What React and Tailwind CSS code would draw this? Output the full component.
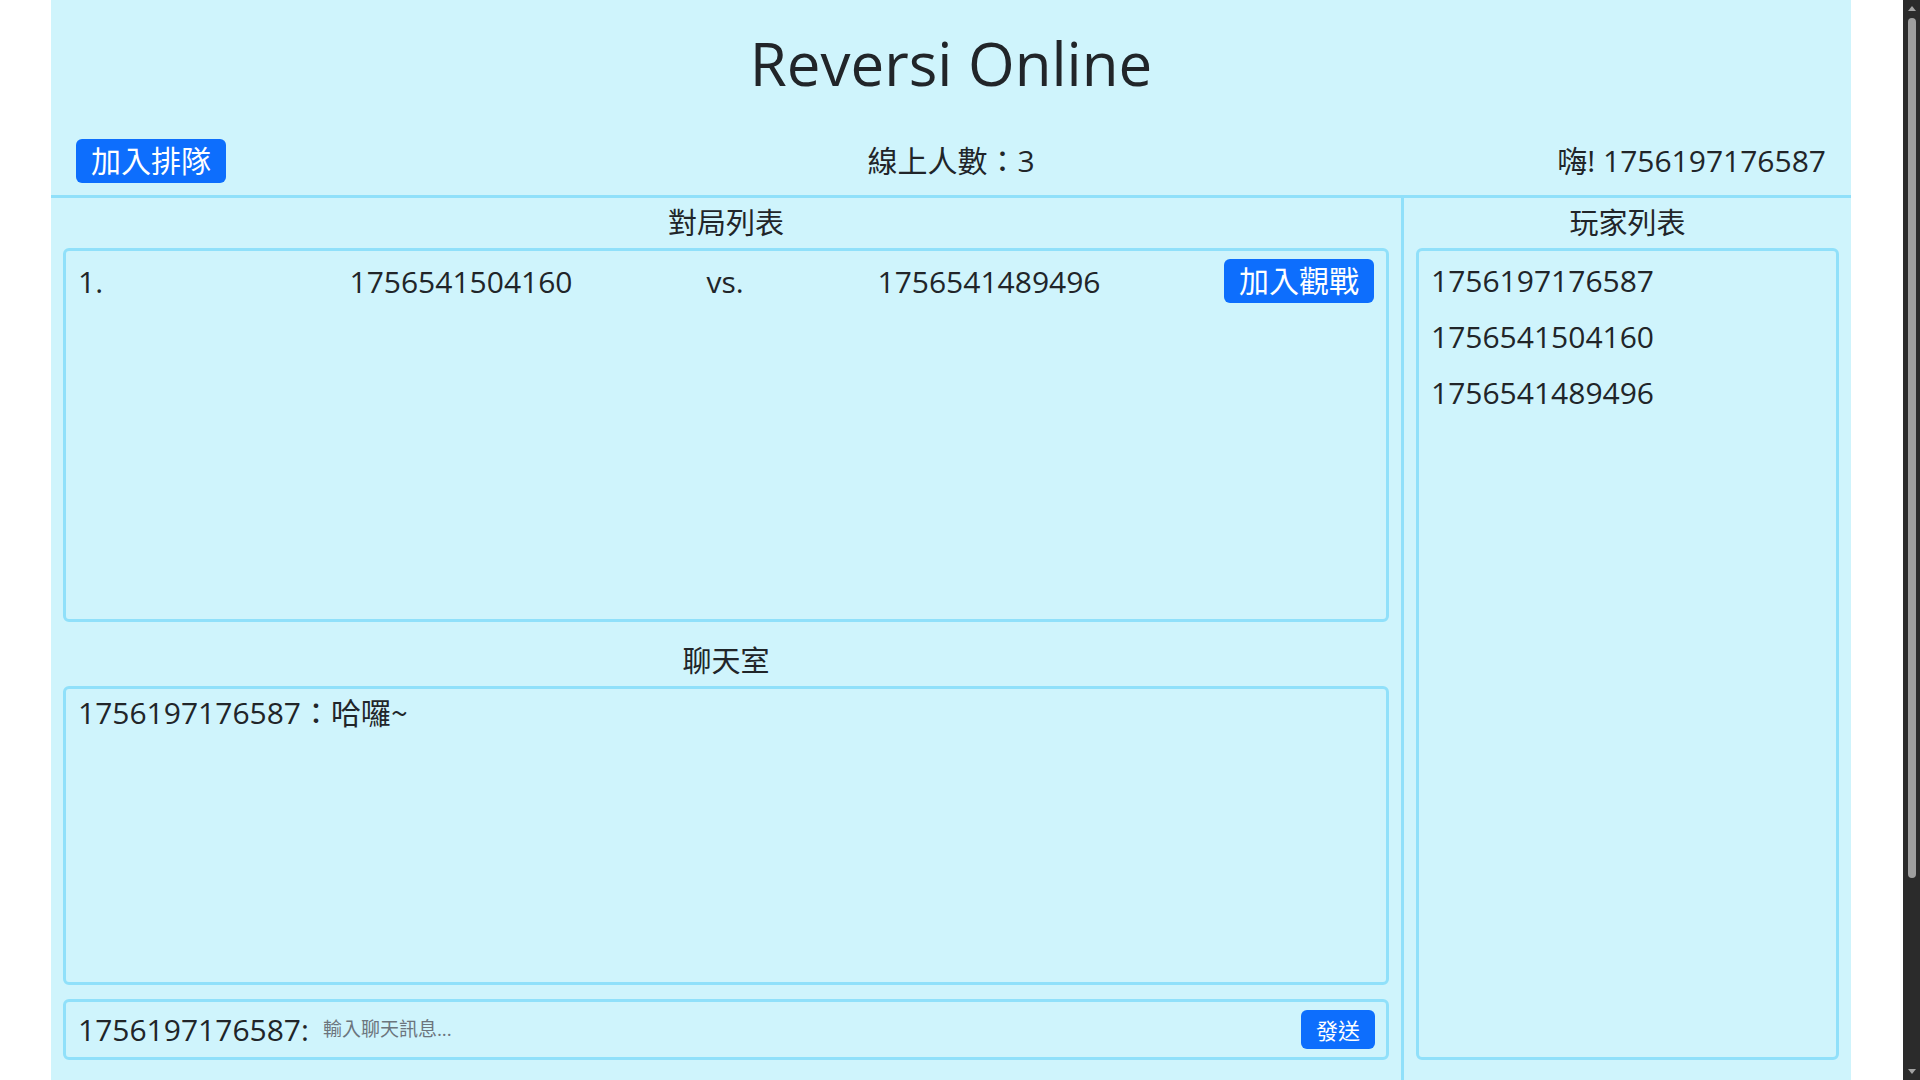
export default function App() {
  const border = "border-[3px] border-[#90e0fa] rounded-[6px]";
  return (
    <div className="relative w-full h-[1080px] bg-white overflow-hidden font-['Open_Sans','Noto_Sans_CJK_TC',sans-serif] text-[#212529]">
      <div className="ml-[51px] w-[1800px] h-full bg-[#cff4fc] flex flex-col">
        <h1 className="pt-[27px] text-center text-[60px] leading-[73px] font-normal">Reversi Online</h1>
        <div className="mt-[38px] grid grid-cols-3 items-center px-[25px] pb-[12px] border-b-[3px] border-[#90e0fa] text-[30px] leading-[1.5]">
          <div>
            <button className="h-[44px] px-[15px] rounded-[6px] bg-[#0d6efd] text-white text-[30px] leading-none">加入排隊</button>
          </div>
          <div className="text-center">線上人數：3</div>
          <div className="text-right">嗨! 1756197176587</div>
        </div>
        <div className="flex flex-1">
          <div className="w-[1350px] px-[12px] pb-[20px] flex flex-col">
            <div className="h-[50px] flex items-center justify-center text-[29px]">對局列表</div>
            <div className={`h-[374px] ${border} px-[12px] pt-[2px]`}>
              <div className="h-[56px] grid grid-cols-[198px_370px_158px_370px_1fr] items-center text-[30px]">
                <div>1.</div>
                <div className="text-center">1756541504160</div>
                <div className="text-center">vs.</div>
                <div className="text-center">1756541489496</div>
                <div className="flex justify-end">
                  <button className="h-[44px] px-[15px] rounded-[6px] bg-[#0d6efd] text-white text-[30px] leading-none">加入觀戰</button>
                </div>
              </div>
            </div>
            <div className="mt-[14px] h-[50px] flex items-center justify-center text-[29px]">聊天室</div>
            <div className={`h-[299px] ${border} px-[12px] text-[30px] leading-[1.5]`}>
              <div>1756197176587：哈囉<span className="font-['Noto_Sans_CJK_TC',sans-serif]">~</span></div>
            </div>
            <div className={`mt-[14px] h-[61px] ${border} pl-[12px] pr-[11px] flex items-center gap-[14px]`}>
              <span className="text-[30px] leading-[1.5]">1756197176587:</span>
              <input
                className="flex-1 bg-transparent outline-none text-[19px] placeholder:text-[#6c757d]"
                placeholder="輸入聊天訊息..."
              />
              <button className="h-[39px] px-[15px] rounded-[6px] bg-[#0d6efd] text-white text-[22px] leading-none">發送</button>
            </div>
          </div>
          <div className="w-[450px] border-l-[3px] border-[#90e0fa] px-[12px] pb-[20px] flex flex-col">
            <div className="h-[50px] flex items-center justify-center text-[29px]">玩家列表</div>
            <div className={`flex-1 ${border} px-[12px] pt-[2px] text-[30px] leading-[56px]`}>
              <div>1756197176587</div>
              <div>1756541504160</div>
              <div>1756541489496</div>
            </div>
          </div>
        </div>
      </div>
      <div className="fixed right-0 top-0 w-[17px] h-[1080px] bg-[#2b2b2b] flex flex-col items-center">
        <div className="h-[17px] flex items-center justify-center">
          <div className="w-0 h-0 border-l-[4px] border-r-[4px] border-b-[5px] border-l-transparent border-r-transparent border-b-[#a3a3a3]"></div>
        </div>
        <div className="mt-[1px] w-[8px] h-[860px] rounded-full bg-[#9f9f9f]"></div>
        <div className="flex-1"></div>
        <div className="h-[17px] flex items-center justify-center">
          <div className="w-0 h-0 border-l-[4px] border-r-[4px] border-t-[5px] border-l-transparent border-r-transparent border-t-[#a3a3a3]"></div>
        </div>
      </div>
    </div>
  );
}
